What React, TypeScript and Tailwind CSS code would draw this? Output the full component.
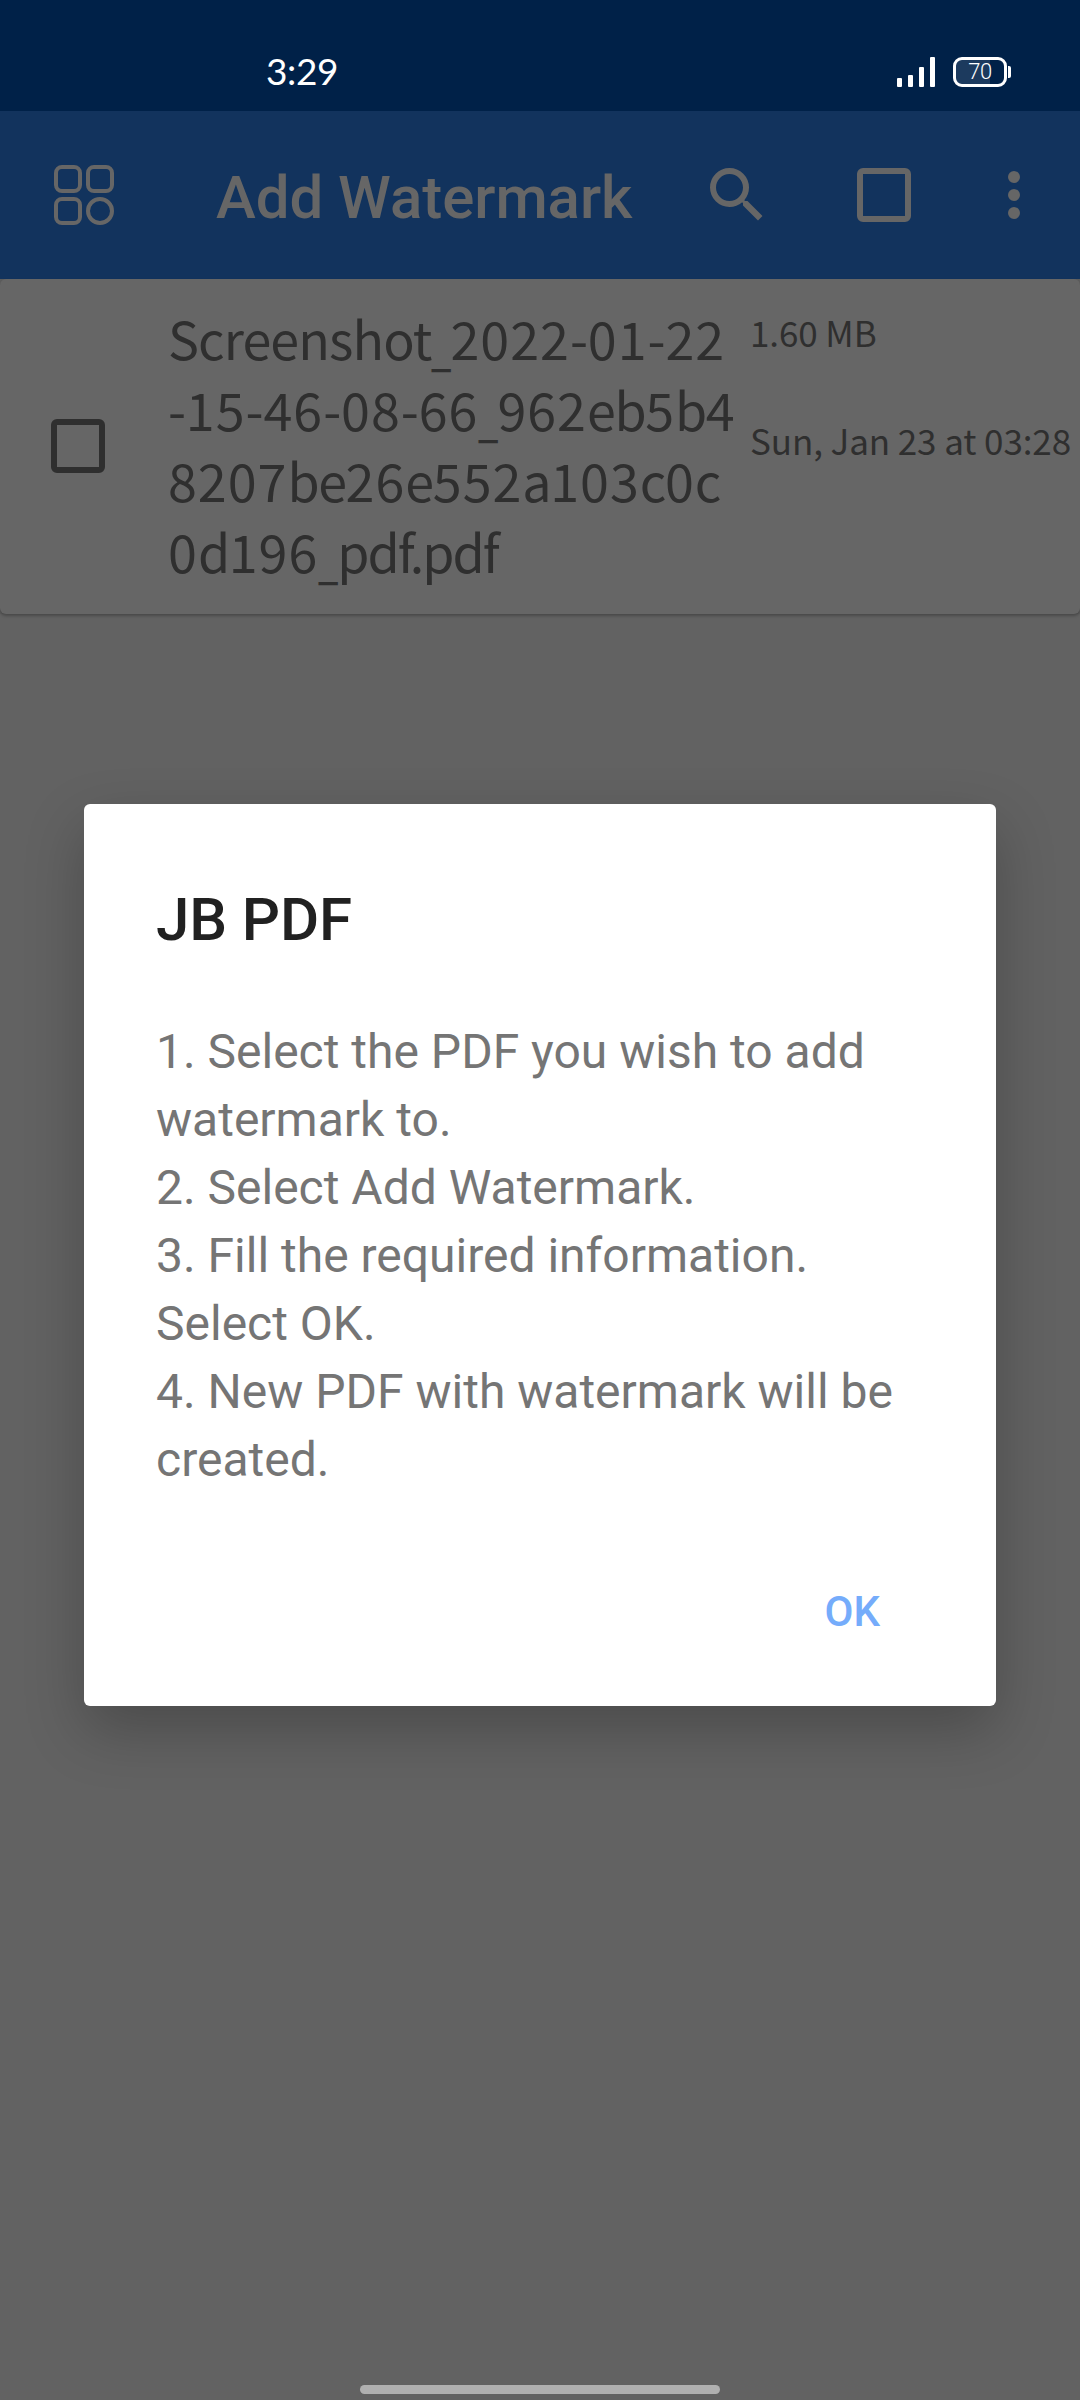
const steps = [
  '1. Select the PDF you wish to add',
  'watermark to.',
  '2. Select Add Watermark.',
  '3. Fill the required information.',
  'Select OK.',
  '4. New PDF with watermark will be',
  'created.',
];

const fileNameLines = [
  'Screenshot_2022-01-22',
  '-15-46-08-66_962eb5b4',
  '8207be26e552a103c0c',
  '0d196_pdf.pdf',
];

function StatusBar() {
  return (
    <div className="flex h-[111px] items-start bg-[#002148] pt-[57px] pl-[266px] text-white">
      <span className="-mt-px w-[631px] font-['Lato',sans-serif] text-[37px] leading-[30px] tracking-[-0.4px]">3:29</span>
      <svg className="h-[30px] w-[38px]" viewBox="0 0 38 30" fill="currentColor">
        <rect x="0" y="21" width="5" height="9" rx="1" />
        <rect x="11" y="18" width="5" height="12" rx="1" />
        <rect x="22" y="10" width="5" height="20" rx="1" />
        <rect x="33" y="0" width="5" height="30" rx="1" />
      </svg>
      <div className="ml-[18px] flex items-center">
        <div className="h-[30px] w-[54px] overflow-hidden rounded-[9px] border-[3px] border-white bg-[linear-gradient(90deg,#1c3a5e_34px,transparent_34px)] text-center font-['Roboto',sans-serif] text-[22px] leading-[24px] font-light tracking-[-0.5px]">
          70
        </div>
        <div className="ml-px h-3 w-[3px] rounded-r-[2px] bg-white" />
      </div>
    </div>
  );
}

function BoxIcon({ className }: { className: string }) {
  return <div className={className} />;
}

function AppBar() {
  return (
    <div className="flex h-[168px] items-center bg-[#12335d] pl-[54px] text-[#666]">
      <svg className="h-[60px] w-[60px]" viewBox="0 0 60 60" fill="none" stroke="currentColor" strokeWidth="4">
        <rect x="2" y="2" width="24" height="24" rx="6" />
        <rect x="34" y="2" width="24" height="24" rx="6" />
        <rect x="2" y="34" width="24" height="24" rx="6" />
        <circle cx="46" cy="46" r="12" />
      </svg>
      <h1 className="ml-[102px] w-[485px] pt-[5px] font-['Roboto',sans-serif] text-[60px] leading-[72px] font-medium tracking-[-0.05px] whitespace-nowrap">
        Add Watermark
      </h1>
      <svg className="h-[72px] w-[72px]" viewBox="0 0 24 24" fill="currentColor">
        <path d="M15.5 14h-.79l-.28-.27A6.471 6.471 0 0 0 16 9.5 6.5 6.5 0 1 0 9.5 16c1.61 0 3.09-.59 4.23-1.57l.27.28v.79l5 4.99L20.49 19l-4.99-5zm-6 0C7.01 14 5 11.99 5 9.5S7.01 5 9.5 5 14 7.01 14 9.5 11.99 14 9.5 14z" />
      </svg>
      <BoxIcon className="ml-[84px] h-[54px] w-[54px] rounded-[6px] border-[6px] border-[#666]" />
      <svg className="ml-[67px] h-[72px] w-[72px]" viewBox="0 0 24 24" fill="currentColor">
        <circle cx="12" cy="6" r="2" />
        <circle cx="12" cy="12" r="2" />
        <circle cx="12" cy="18" r="2" />
      </svg>
    </div>
  );
}

function trackingFor(run: string) {
  if (/[0-9]/.test(run)) return 'tracking-[1px]';
  if (run === '-') return 'tracking-[-0.2px]';
  if (run.includes('pdf')) return 'tracking-[-2px]';
  if (run.length > 2) return 'tracking-[-0.9px]';
  return 'tracking-[-1.4px]';
}

// Digits are set slightly looser than letters, and underscores are short and low.
function FileNameLine({ text }: { text: string }) {
  const runs = text.match(/_|[0-9]+|[^_0-9]+/g) ?? [];
  return (
    <div>
      {runs.map((run, i) =>
        run === '_' ? (
          <span key={i} className="inline-block w-[19px] origin-left translate-y-[5px] scale-x-[0.7]">
            _
          </span>
        ) : (
          <span key={i} className={trackingFor(run)}>
            {run}
          </span>
        ),
      )}
    </div>
  );
}

function FileCard() {
  return (
    <div className="bg-[#5d5d5d]">
      <div className="flex h-[335px] items-start rounded-[6px] bg-[#666] pl-[51px] font-['Noto_Sans_CJK_SC',sans-serif] text-[#2f2f2f] shadow-[0_2px_3px_rgba(0,0,0,0.25)]">
        <BoxIcon className="mt-[140px] h-[54px] w-[54px] shrink-0 rounded-[6px] border-[6px] border-[#2f2f2f]" />
        <div className="mt-[23px] ml-[63px] w-[582px] shrink-0 text-[52px] leading-[71px] whitespace-nowrap">
          {fileNameLines.map((line) => (
            <FileNameLine key={line} text={line} />
          ))}
        </div>
        <div className="mt-[26px] text-[35px] leading-[54px] tracking-[-0.1px] whitespace-nowrap">
          <div>1.60 MB</div>
          <div className="mt-[54px]">Sun, Jan 23 at 03:28</div>
        </div>
      </div>
    </div>
  );
}

function Dialog() {
  return (
    <div className="absolute top-[804px] left-[84px] flex h-[902px] w-[912px] flex-col rounded-[6px] bg-white px-[72px] font-['Roboto',sans-serif] shadow-[0_24px_60px_rgba(0,0,0,0.24)]">
      <h2 className="mt-[80px] text-[60px] leading-[72px] font-medium tracking-[-0.1px] text-[#212121]">JB PDF</h2>
      <div className="mt-[62px] text-[48px] leading-[68px] whitespace-nowrap text-[#757575]">
        {steps.map((line) => (
          <div key={line}>{line}</div>
        ))}
      </div>
      <button className="mt-[93px] mr-[44px] self-end text-[42px] leading-[50px] font-medium text-[#75acfb]">OK</button>
    </div>
  );
}

export default function App() {
  return (
    <div className="relative flex h-[2400px] w-[1080px] flex-col overflow-hidden bg-[#626262]">
      <StatusBar />
      <AppBar />
      <FileCard />
      <Dialog />
      <div className="mx-auto mt-auto mb-[6px] h-[9px] w-[360px] rounded-full bg-[#b0b0b0]" />
    </div>
  );
}
